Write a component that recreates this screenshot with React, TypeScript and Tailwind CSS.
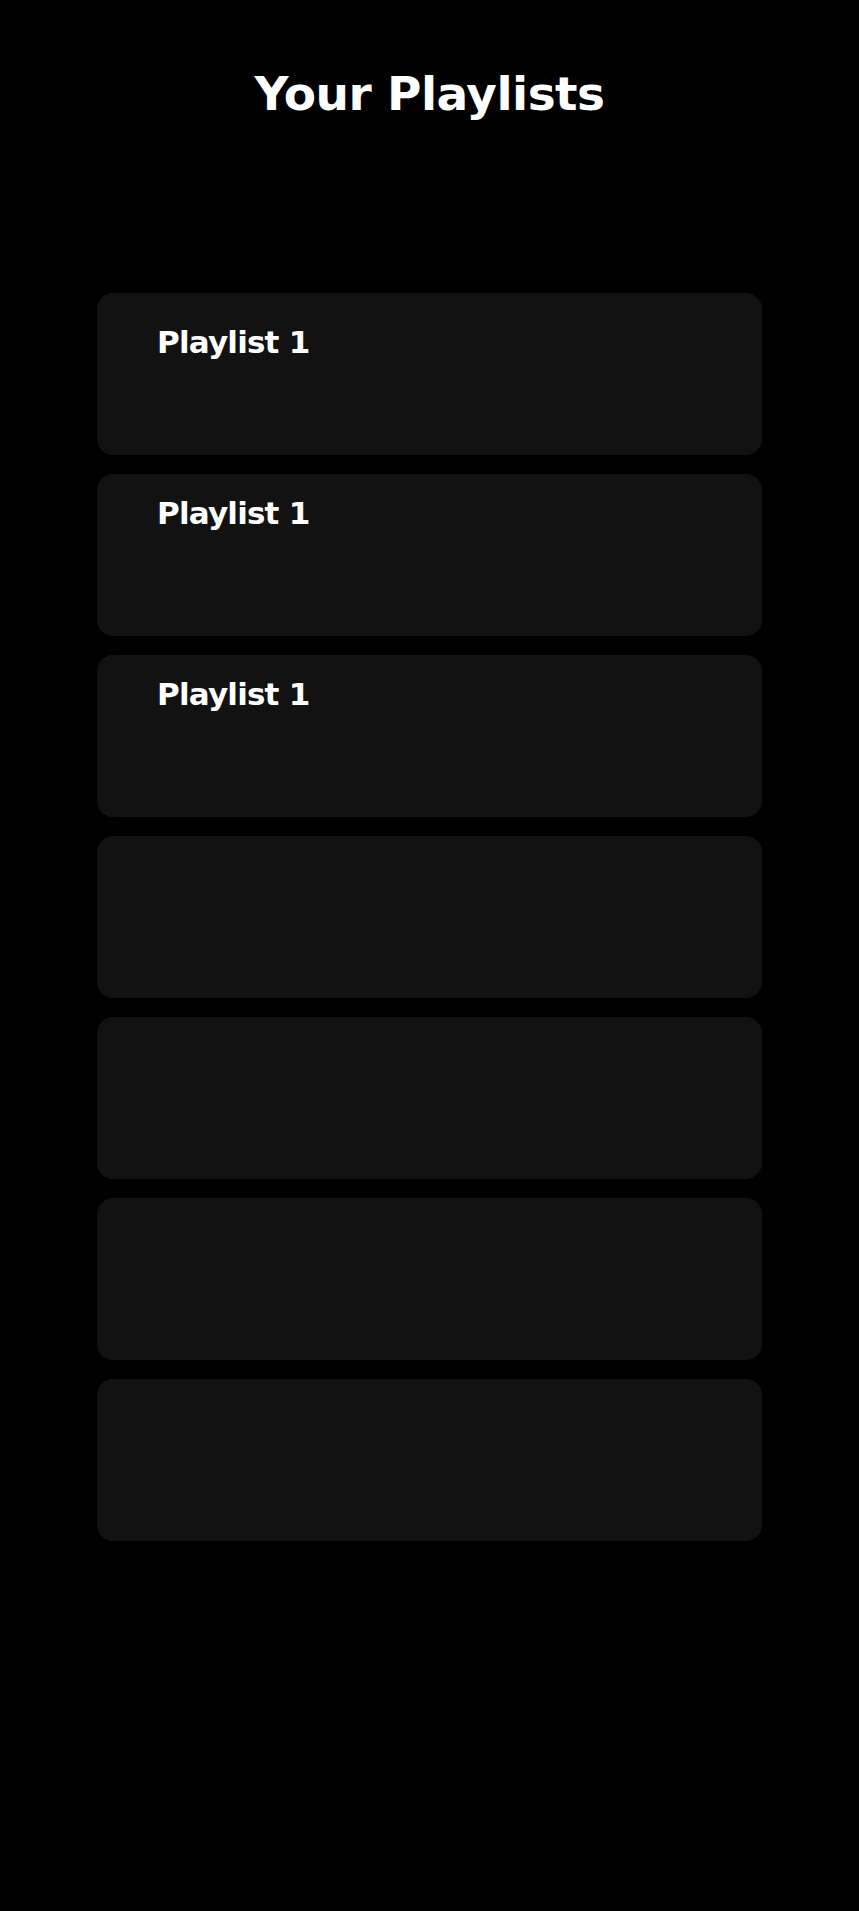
export default function App() {
  const cards = [
    { t: true, pt: "pt-[29px]" },
    { t: true, pt: "pt-[19px]" },
    { t: true, pt: "pt-[19px]" },
    { t: false, pt: "" },
    { t: false, pt: "" },
    { t: false, pt: "" },
    { t: false, pt: "" },
  ];
  return (
    <div className="min-h-[1911px] w-full bg-black" style={{ fontFamily: '"DejaVu Sans", "Noto Sans", sans-serif' }}>
      <h1 className="pt-[62px] text-center text-[47px] font-bold leading-[64px] tracking-[-0.5px] text-white">
        Your Playlists
      </h1>
      <div className="mt-[167px] flex flex-col gap-[19px] px-[97px]">
        {cards.map((c, i) => (
          <div key={i} className={`h-[162px] rounded-[16px] bg-[#121212] pl-[60px] ${c.pt}`}>
            {c.t && <div className="text-[31px] font-bold leading-[40px] tracking-[-0.8px] text-white">Playlist 1</div>}
          </div>
        ))}
      </div>
    </div>
  );
}
